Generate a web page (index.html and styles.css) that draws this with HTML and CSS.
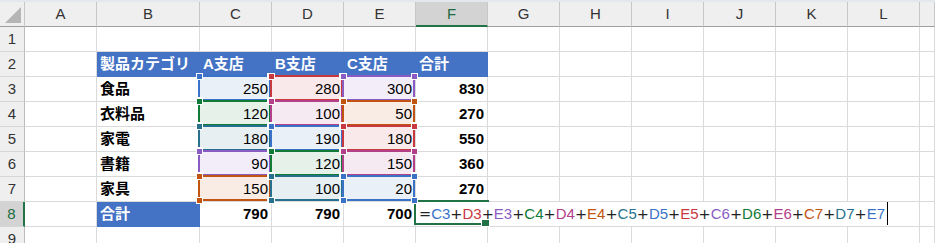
FILE: index.html
```html
<!DOCTYPE html>
<html lang="ja">
<head>
    <meta charset="UTF-8">
    <meta name="viewport" content="width=device-width, initial-scale=1.0">
    <title>売上集計</title>
    <link rel="stylesheet" href="styles.css">
</head>
<body>
    <div class="ribbon-edge"></div>

    <div class="sheet">
        <!-- column headers -->
        <div class="corner"></div>
        <div class="ch">A</div>
        <div class="ch">B</div>
        <div class="ch">C</div>
        <div class="ch">D</div>
        <div class="ch">E</div>
        <div class="ch active">F</div>
        <div class="ch">G</div>
        <div class="ch">H</div>
        <div class="ch">I</div>
        <div class="ch">J</div>
        <div class="ch">K</div>
        <div class="ch">L</div>
        <div class="ch"></div>

        <!-- row 1 -->
        <div class="rh">1</div>
        <div class="c"></div><div class="c"></div><div class="c"></div><div class="c"></div><div class="c"></div><div class="c"></div>
        <div class="c"></div><div class="c"></div><div class="c"></div><div class="c"></div><div class="c"></div><div class="c"></div><div class="c"></div>

        <!-- row 2 -->
        <div class="rh">2</div>
        <div class="c"></div>
        <div class="c hd">製品カテゴリ</div>
        <div class="c hd">A支店</div>
        <div class="c hd">B支店</div>
        <div class="c hd">C支店</div>
        <div class="c hd">合計</div>
        <div class="c"></div><div class="c"></div><div class="c"></div><div class="c"></div><div class="c"></div><div class="c"></div><div class="c"></div>

        <!-- row 3 -->
        <div class="rh">3</div>
        <div class="c"></div>
        <div class="c b">食品</div>
        <div class="c num ref r1">250<span class="ref-box"><i class="tl"></i><i class="tr"></i><i class="bl"></i><i class="br"></i></span></div>
        <div class="c num ref r2">280<span class="ref-box"><i class="tl"></i><i class="tr"></i><i class="bl"></i><i class="br"></i></span></div>
        <div class="c num ref r3">300<span class="ref-box"><i class="tl"></i><i class="tr"></i><i class="bl"></i><i class="br"></i></span></div>
        <div class="c num b">830</div>
        <div class="c"></div><div class="c"></div><div class="c"></div><div class="c"></div><div class="c"></div><div class="c"></div><div class="c"></div>

        <!-- row 4 -->
        <div class="rh">4</div>
        <div class="c"></div>
        <div class="c b">衣料品</div>
        <div class="c num ref r4">120<span class="ref-box"><i class="tl"></i><i class="tr"></i><i class="bl"></i><i class="br"></i></span></div>
        <div class="c num ref r5">100<span class="ref-box"><i class="tl"></i><i class="tr"></i><i class="bl"></i><i class="br"></i></span></div>
        <div class="c num ref r6">50<span class="ref-box"><i class="tl"></i><i class="tr"></i><i class="bl"></i><i class="br"></i></span></div>
        <div class="c num b">270</div>
        <div class="c"></div><div class="c"></div><div class="c"></div><div class="c"></div><div class="c"></div><div class="c"></div><div class="c"></div>

        <!-- row 5 -->
        <div class="rh">5</div>
        <div class="c"></div>
        <div class="c b">家電</div>
        <div class="c num ref r7">180<span class="ref-box"><i class="tl"></i><i class="tr"></i><i class="bl"></i><i class="br"></i></span></div>
        <div class="c num ref r1">190<span class="ref-box"><i class="tl"></i><i class="tr"></i><i class="bl"></i><i class="br"></i></span></div>
        <div class="c num ref r2">180<span class="ref-box"><i class="tl"></i><i class="tr"></i><i class="bl"></i><i class="br"></i></span></div>
        <div class="c num b">550</div>
        <div class="c"></div><div class="c"></div><div class="c"></div><div class="c"></div><div class="c"></div><div class="c"></div><div class="c"></div>

        <!-- row 6 -->
        <div class="rh">6</div>
        <div class="c"></div>
        <div class="c b">書籍</div>
        <div class="c num ref r3">90<span class="ref-box"><i class="tl"></i><i class="tr"></i><i class="bl"></i><i class="br"></i></span></div>
        <div class="c num ref r4">120<span class="ref-box"><i class="tl"></i><i class="tr"></i><i class="bl"></i><i class="br"></i></span></div>
        <div class="c num ref r5">150<span class="ref-box"><i class="tl"></i><i class="tr"></i><i class="bl"></i><i class="br"></i></span></div>
        <div class="c num b">360</div>
        <div class="c"></div><div class="c"></div><div class="c"></div><div class="c"></div><div class="c"></div><div class="c"></div><div class="c"></div>

        <!-- row 7 -->
        <div class="rh">7</div>
        <div class="c"></div>
        <div class="c b">家具</div>
        <div class="c num ref r6">150<span class="ref-box"><i class="tl"></i><i class="tr"></i><i class="bl"></i><i class="br"></i></span></div>
        <div class="c num ref r7">100<span class="ref-box"><i class="tl"></i><i class="tr"></i><i class="bl"></i><i class="br"></i></span></div>
        <div class="c num ref r1">20<span class="ref-box"><i class="tl"></i><i class="tr"></i><i class="bl"></i><i class="br"></i></span></div>
        <div class="c num b">270</div>
        <div class="c"></div><div class="c"></div><div class="c"></div><div class="c"></div><div class="c"></div><div class="c"></div><div class="c"></div>

        <!-- row 8 -->
        <div class="rh active">8</div>
        <div class="c"></div>
        <div class="c hd">合計</div>
        <div class="c num b">790</div>
        <div class="c num b">790</div>
        <div class="c num b">700</div>
        <div class="c editing">
            <span class="formula"><span class="op">=</span><span class="tok r1">C3</span><span class="op">+</span><span class="tok r2">D3</span><span class="op">+</span><span class="tok r3">E3</span><span class="op">+</span><span class="tok r4">C4</span><span class="op">+</span><span class="tok r5">D4</span><span class="op">+</span><span class="tok r6">E4</span><span class="op">+</span><span class="tok r7">C5</span><span class="op">+</span><span class="tok r1">D5</span><span class="op">+</span><span class="tok r2">E5</span><span class="op">+</span><span class="tok r3">C6</span><span class="op">+</span><span class="tok r4">D6</span><span class="op">+</span><span class="tok r5">E6</span><span class="op">+</span><span class="tok r6">C7</span><span class="op">+</span><span class="tok r7">D7</span><span class="op">+</span><span class="tok r1">E7</span><span class="cursor"></span></span>
            <span class="sel"></span>
        </div>
        <div class="c"></div><div class="c"></div><div class="c"></div><div class="c"></div><div class="c"></div><div class="c"></div><div class="c"></div>

        <!-- row 9 -->
        <div class="rh">9</div>
        <div class="c"></div><div class="c"></div><div class="c"></div><div class="c"></div><div class="c"></div><div class="c"></div>
        <div class="c"></div><div class="c"></div><div class="c"></div><div class="c"></div><div class="c"></div><div class="c"></div><div class="c"></div>
    </div>
</body>
</html>
```

FILE: styles.css
```css
* {
    box-sizing: border-box;
}

body {
    margin: 0;
    background-color: #fff;
    font-family: "Liberation Sans", "Noto Sans CJK JP", sans-serif;
    font-size: 15px;
    color: #000;
    overflow: hidden;
}

.ribbon-edge {
    height: 2px;
    background-color: #e4e7eb;
}

.sheet {
    display: grid;
    grid-template-columns: 25px 72px 103px repeat(10, 72px) 1fr;
    grid-auto-rows: 25px;
}

/* headers */
.corner,
.ch {
    background-color: #efefef;
    border-right: 1px solid #c8c8c8;
    border-bottom: 1px solid #9f9f9f;
}

.corner {
    position: relative;
}

.corner::after {
    content: "";
    position: absolute;
    right: 3px;
    bottom: 3px;
    width: 16px;
    height: 16px;
    background-color: #b5b5b5;
    clip-path: polygon(100% 0, 100% 100%, 0 100%);
}

.ch {
    text-align: center;
    line-height: 24px;
    color: #333;
}

.ch.active {
    background-color: #d3d3d3;
    border-bottom: 2px solid #217346;
    color: #1c6a40;
}

.rh {
    background-color: #efefef;
    border-right: 1px solid #bdbdbd;
    border-bottom: 1px solid #d6d6d6;
    text-align: center;
    line-height: 24px;
    color: #333;
}

.rh.active {
    background-color: #d3d3d3;
    border-right: 2px solid #217346;
    color: #1c6a40;
}

/* cells */
.c {
    border-right: 1px solid #dadada;
    border-bottom: 1px solid #dadada;
    padding: 0 3px;
    line-height: 23px;
    white-space: nowrap;
}

.hd {
    background-color: #4472c4;
    border-color: #4472c4;
    color: #fff;
    font-weight: bold;
}

.b {
    font-weight: bold;
}

.num {
    text-align: right;
}

/* formula reference colours */
.r1 { --line: #3a72c8; --fill: #eaf0f8; }
.r2 { --line: #c7383f; --fill: #f9e9ea; }
.r3 { --line: #8a5cc3; --fill: #f2edf8; }
.r4 { --line: #117a37; --fill: #e6f1e9; }
.r5 { --line: #b2418a; --fill: #f6eaf2; }
.r6 { --line: #c25411; --fill: #f8ece5; }
.r7 { --line: #27718e; --fill: #e7eff3; }

.ref {
    position: relative;
    background-color: var(--fill);
}

.ref-box {
    position: absolute;
    left: -2px;
    top: -2px;
    right: 0;
    bottom: 0;
    border: 2px solid var(--line);
}

.ref-box i {
    position: absolute;
    width: 7px;
    height: 7px;
    background-color: var(--line);
    border: 1px solid #fff;
    z-index: 4;
}

.ref-box .tl { left: -4px; top: -4px; }
.ref-box .tr { right: -5px; top: -4px; }
.ref-box .bl { left: -4px; bottom: -5px; }
.ref-box .br { right: -5px; bottom: -5px; }

/* cell being edited */
.editing {
    position: relative;
    z-index: 3;
    padding: 0;
}

.formula {
    display: block;
    width: max-content;
    min-width: 100%;
    height: 24px;
    padding: 0 3px;
    background-color: #fff;
}

.tok {
    color: var(--line);
}

.op {
    font-family: "DejaVu Sans", sans-serif;
    font-size: 14.5px;
    color: #222;
}

.cursor {
    display: inline-block;
    width: 1px;
    height: 23px;
    margin-left: 2px;
    background-color: #000;
    vertical-align: top;
}

.sel {
    position: absolute;
    left: -2px;
    top: -2px;
    right: -2px;
    bottom: 1px;
    border: 2px solid #217346;
    border-right: none;
}

.sel::after {
    content: "";
    position: absolute;
    right: -1px;
    bottom: -4px;
    width: 7px;
    height: 6px;
    background-color: #217346;
    border: 1px solid #fff;
}
```
